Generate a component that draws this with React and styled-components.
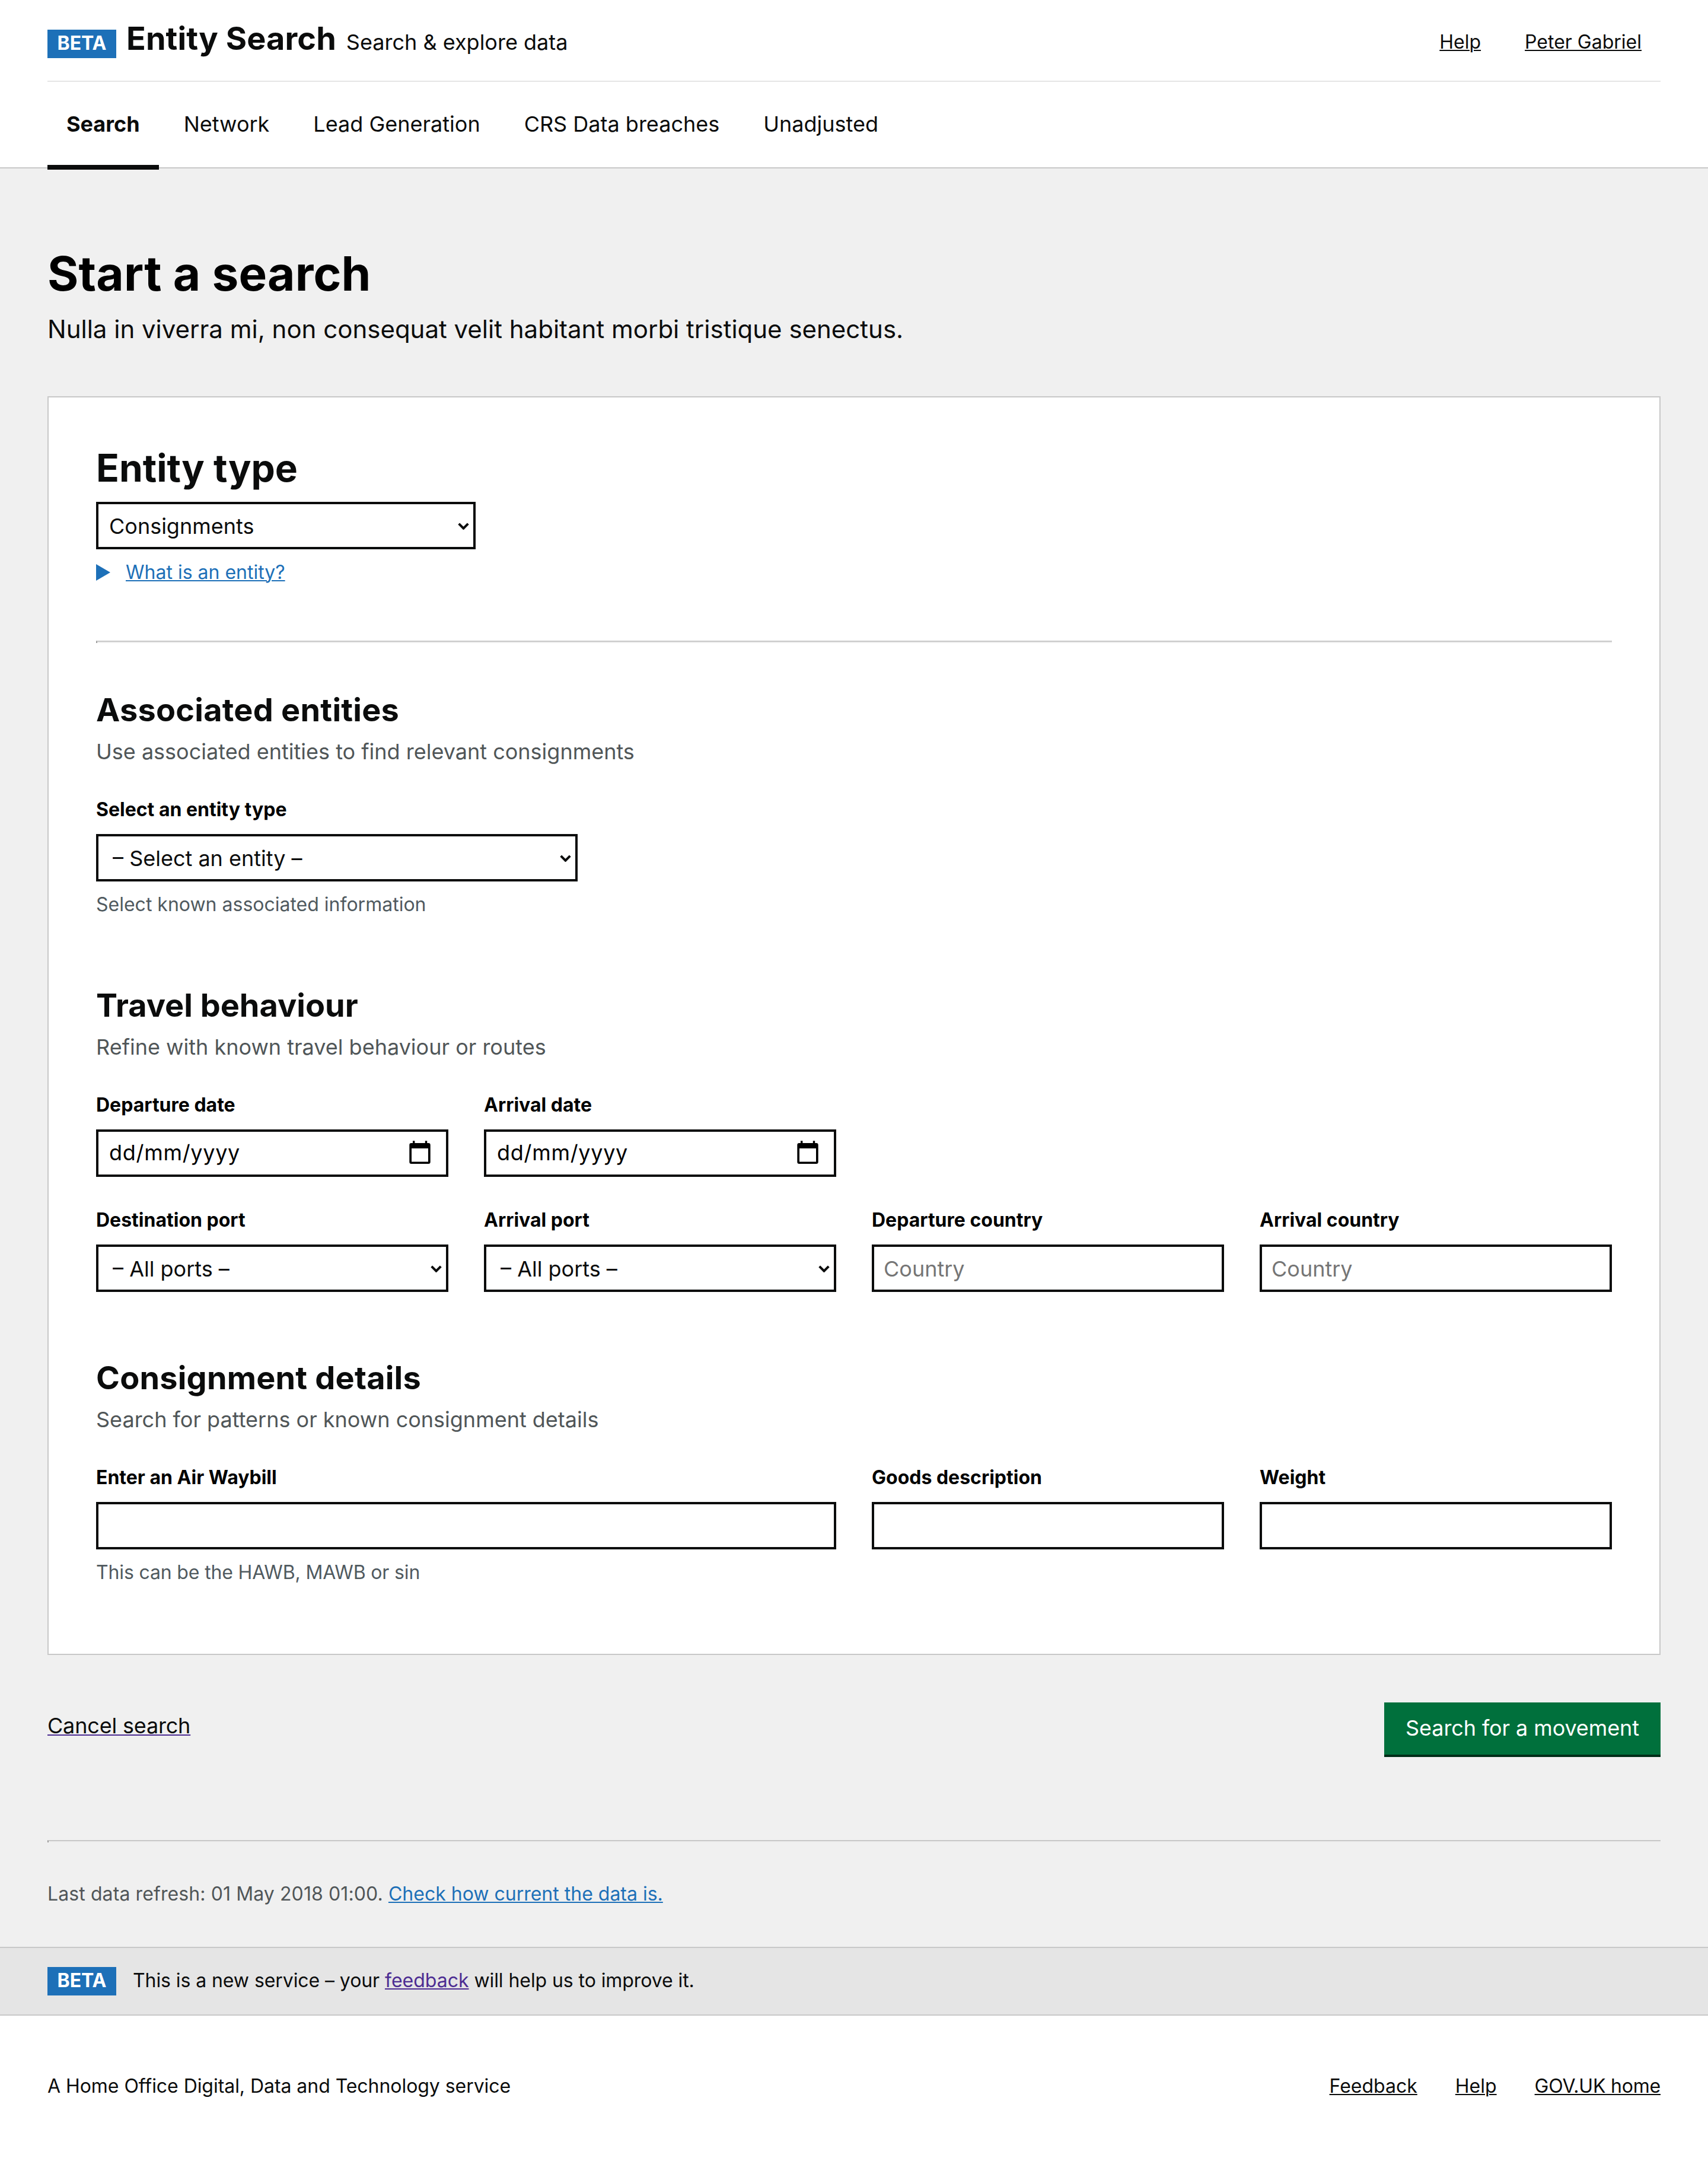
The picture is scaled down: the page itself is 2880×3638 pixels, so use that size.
import React from "react";
import styled, { createGlobalStyle } from "styled-components";

const ink = "#0b0c0c";
const hintGrey = "#505658";
const noteGrey = "#505a5f";
const line = "#c8c8c8";
const blue = "#1d70b8";
const purple = "#4c2c92";

const GlobalStyle = createGlobalStyle`
  *, *::before, *::after { box-sizing: border-box; }
  body {
    margin: 0;
    background: #fff;
    color: ${ink};
    font-family: Inter, "Liberation Sans", sans-serif;
    font-size: 36px;
    line-height: 50px;
    -webkit-font-smoothing: antialiased;
  }
  h1, h2, h3, p { margin: 0; }
`;

const Page = styled.div`
  min-height: 3638px;
  display: flex;
  flex-direction: column;
`;

/* Header */

const Header = styled.header`
  background: #fff;
  border-bottom: 2px solid ${line};
  padding: 0 80px;
  height: 284px;
`;

const TopBar = styled.div`
  display: flex;
  justify-content: space-between;
  align-items: flex-start;
  height: 138px;
  border-bottom: 2px solid #e5e5e5;
`;

const Brand = styled.div`
  display: flex;
  align-items: baseline;
  padding-top: 34px;
`;

const Tag = styled.strong`
  flex: none;
  width: 116px;
  height: 48px;
  padding-top: 8px;
  background: ${blue};
  color: #fff;
  font-size: 32px;
  line-height: 29px;
  font-weight: 700;
  text-align: center;
`;

const ProductName = styled.span`
  margin-left: 17px;
  font-size: 54px;
  line-height: 61px;
  font-weight: 700;
  letter-spacing: 0.1px;
`;

const Tagline = styled.span`
  margin-left: 17px;
`;

const UserLinks = styled.nav`
  display: flex;
  gap: 74px;
  padding: 50px 32px 0 0;
  font-size: 32px;
  line-height: 41px;
`;

const Link = styled.a`
  color: ${(p) => p.$color || ink};
  letter-spacing: ${(p) => p.$tracking || 0}px;
  text-decoration: underline;
  text-decoration-color: ${(p) => p.$underline || p.$color || ink};
  text-decoration-thickness: 2px;
  text-underline-offset: 2px;
`;

const Nav = styled.nav`
  display: flex;
  gap: 10px;
`;

const NavItem = styled.a`
  height: 148px;
  padding: 46px 32px 0;
  border-bottom: 8px solid ${(p) => (p.$active ? ink : "transparent")};
  color: ${ink};
  font-weight: ${(p) => (p.$active ? 700 : 400)};
  text-decoration: none;
  z-index: 1;
`;

/* Main */

const Main = styled.main`
  padding: 127px 80px 69px;
  background: #f0f0f0;
`;

const Title = styled.h1`
  color: #000;
  font-size: 80px;
  line-height: 100px;
  letter-spacing: 0.15px;
`;

const Lead = styled.p`
  margin: 16px 0 85px;
  font-size: 42px;
  line-height: 56px;
`;

const Card = styled.form`
  border: 2px solid ${line};
  background: #fff;
  padding: 78px 80px 117px;
`;

const EntityHeading = styled.h2`
  margin-bottom: 17px;
  font-size: 64px;
  line-height: 81px;
`;

const Summary = styled.div`
  display: flex;
  align-items: center;
  gap: 26px;
  margin-top: 18px;
  font-size: 32px;
  line-height: 41px;
`;

const Triangle = styled.span`
  border-left: 24px solid ${blue};
  border-top: 14px solid transparent;
  border-bottom: 14px solid transparent;
`;

const Rule = styled.hr`
  height: 4px;
  margin: ${(p) => p.$top}px 0 0;
  border: 0;
  border-top: 2px solid ${line};
  border-left: 2px solid #9a9a9a;
  background: #eee;
`;

const Section = styled.section`
  margin-top: ${(p) => p.$top}px;
`;

const SectionTitle = styled.h2`
  font-size: 54px;
  line-height: 67px;
  letter-spacing: ${(p) => p.$tracking || 0}px;
`;

const Hint = styled.p`
  margin-top: 12px;
  color: ${hintGrey};
`;

const FieldGrid = styled.div`
  display: grid;
  grid-template-columns: repeat(4, 594px);
  column-gap: 60px;
  margin-top: 52px;
`;

const FieldBox = styled.div`
  grid-column: span ${(p) => p.$span || 1};
  width: ${(p) => (p.$width ? `${p.$width}px` : "auto")};
`;

const Label = styled.label`
  display: block;
  margin-bottom: 21px;
  color: #000;
  font-size: 32px;
  line-height: 41px;
  font-weight: 700;
`;

const Note = styled.p`
  margin-top: 18px;
  color: ${noteGrey};
  font-size: 32px;
  line-height: 41px;
  letter-spacing: ${(p) => p.$tracking || 0}px;
`;

const Control = styled.div`
  display: flex;
  align-items: center;
  width: ${(p) => (p.$width ? `${p.$width}px` : "100%")};
  height: 80px;
  padding-right: ${(p) => p.$right || 0}px;
  border: 4px solid ${ink};
  background: #fff;
`;

const NativeSelect = styled.select`
  flex: 1;
  min-width: 0;
  height: 72px;
  padding: 2px 0 0 ${(p) => p.$indent}px;
  border: 0;
  outline: 0;
  appearance: none;
  background: transparent;
  color: ${ink};
  font: inherit;
`;

const NativeInput = styled.input`
  flex: 1;
  min-width: 0;
  height: 72px;
  padding: ${(p) => (p.$date ? "0 0 2px 18px" : "2px 0 0 16px")};
  border: 0;
  outline: 0;
  background: transparent;
  color: ${ink};
  font: inherit;
  letter-spacing: ${(p) => (p.$date ? "0.7px" : "normal")};
  &::placeholder {
    color: ${(p) => (p.$date ? "#000" : "#757575")};
    opacity: 1;
  }
`;

const ChevronIcon = styled.svg`
  flex: none;
  margin-top: 2px;
`;

const DateIcon = styled.svg`
  flex: none;
  margin-bottom: 2px;
`;

/* Actions and footer */

const Actions = styled.div`
  display: flex;
  justify-content: space-between;
  align-items: flex-start;
  margin-top: 80px;
  height: 88px;
`;

const CancelSlot = styled.div`
  padding-top: 14px;
`;

const SubmitButton = styled.button`
  width: 466px;
  height: 88px;
  padding: 0 0 2px;
  border: 0;
  border-radius: 0;
  background: #00703c;
  box-shadow: 0 4px 0 #002d18;
  color: #fff;
  font: inherit;
  letter-spacing: -0.1px;
`;

const Refresh = styled.p`
  margin-top: 66px;
  color: ${hintGrey};
  font-size: 32px;
  line-height: 41px;
  letter-spacing: 0.1px;
`;

const PhaseBanner = styled.div`
  display: flex;
  align-items: baseline;
  gap: 28px;
  height: 116px;
  padding: 32px 80px 0;
  border-top: 2px solid ${line};
  border-bottom: 2px solid ${line};
  background: #e5e5e5;
  font-size: 32px;
  line-height: 41px;
`;

const PhaseText = styled.span`
  letter-spacing: -0.08px;
`;

const Footer = styled.footer`
  display: flex;
  justify-content: space-between;
  padding: 98px 80px 0;
  font-size: 32px;
  line-height: 41px;
`;

const FooterText = styled.span`
  letter-spacing: -0.05px;
`;

const FooterLinks = styled.nav`
  display: flex;
  gap: 64px;
`;

function Chevron() {
  return (
    <ChevronIcon width="19" height="12" viewBox="0 0 19 12" fill="none" aria-hidden="true">
      <path d="M1.7 1.9 9.5 9.7 17.3 1.9" stroke={ink} strokeWidth="4" />
    </ChevronIcon>
  );
}

function CalendarIcon() {
  return (
    <DateIcon width="36" height="40" viewBox="0 0 36 40" aria-hidden="true">
      <path
        fill="#000"
        fillRule="evenodd"
        d="M6 0.3h3.4V4h17.4V0.3h3.4V4h2.3a3.2 3.2 0 0 1 3.2 3.2v28.6a3.2 3.2 0 0 1-3.2 3.2h-29A3.2 3.2 0 0 1 .3 35.8V7.2A3.2 3.2 0 0 1 3.5 4H6zM4 13v22.5h28V13z"
      />
    </DateIcon>
  );
}

function Select({ id, value, width, indent = 24 }) {
  return (
    <Control $width={width} $right={7}>
      <NativeSelect id={id} defaultValue={value} $indent={indent}>
        <option value={value}>{value}</option>
      </NativeSelect>
      <Chevron />
    </Control>
  );
}

function Field({ id, label, note, noteTracking, span, width, children }) {
  return (
    <FieldBox $span={span} $width={width}>
      <Label htmlFor={id}>{label}</Label>
      {children}
      {note && <Note $tracking={noteTracking}>{note}</Note>}
    </FieldBox>
  );
}

function DateField({ id, label }) {
  return (
    <Field id={id} label={label}>
      <Control $right={26}>
        <NativeInput id={id} $date placeholder="dd/mm/yyyy" />
        <CalendarIcon />
      </Control>
    </Field>
  );
}

function TextField({ placeholder, ...field }) {
  return (
    <Field {...field}>
      <Control>
        <NativeInput id={field.id} placeholder={placeholder} />
      </Control>
    </Field>
  );
}

const navItems = ["Search", "Network", "Lead Generation", "CRS Data breaches", "Unadjusted"];

export default function App() {
  return (
    <Page>
      <GlobalStyle />
      <Header>
        <TopBar>
          <Brand>
            <Tag>BETA</Tag>
            <ProductName>Entity Search</ProductName>
            <Tagline>Search &amp; explore data</Tagline>
          </Brand>
          <UserLinks>
            <Link>Help</Link>
            <Link>Peter Gabriel</Link>
          </UserLinks>
        </TopBar>
        <Nav>
          {navItems.map((name) => (
            <NavItem key={name} $active={name === "Search"}>
              {name}
            </NavItem>
          ))}
        </Nav>
      </Header>

      <Main>
        <Title>Start a search</Title>
        <Lead>Nulla in viverra mi, non consequat velit habitant morbi tristique senectus.</Lead>

        <Card>
          <EntityHeading>Entity type</EntityHeading>
          <Select id="entity" value="Consignments" width={640} indent={18} />
          <Summary>
            <Triangle />
            <Link $color={blue}>What is an entity?</Link>
          </Summary>
          <Rule $top={95} />

          <Section $top={79}>
            <SectionTitle $tracking={0.25}>Associated entities</SectionTitle>
            <Hint>Use associated entities to find relevant consignments</Hint>
            <FieldGrid>
              <Field
                id="associated"
                label="Select an entity type"
                note="Select known associated information"
                span={2}
                width={812}
              >
                <Select id="associated" value="– Select an entity –" />
              </Field>
            </FieldGrid>
          </Section>

          <Section $top={116}>
            <SectionTitle>Travel behaviour</SectionTitle>
            <Hint>Refine with known travel behaviour or routes</Hint>
            <FieldGrid>
              <DateField id="departure-date" label="Departure date" />
              <DateField id="arrival-date" label="Arrival date" />
            </FieldGrid>
            <FieldGrid>
              <Field id="destination-port" label="Destination port">
                <Select id="destination-port" value="– All ports –" />
              </Field>
              <Field id="arrival-port" label="Arrival port">
                <Select id="arrival-port" value="– All ports –" />
              </Field>
              <TextField id="departure-country" label="Departure country" placeholder="Country" />
              <TextField id="arrival-country" label="Arrival country" placeholder="Country" />
            </FieldGrid>
          </Section>

          <Section $top={111}>
            <SectionTitle $tracking={0.2}>Consignment details</SectionTitle>
            <Hint>Search for patterns or known consignment details</Hint>
            <FieldGrid>
              <TextField
                id="waybill"
                label="Enter an Air Waybill"
                note="This can be the HAWB, MAWB or sin"
                noteTracking={-0.15}
                span={2}
              />
              <TextField id="goods" label="Goods description" />
              <TextField id="weight" label="Weight" />
            </FieldGrid>
          </Section>
        </Card>

        <Actions>
          <CancelSlot>
            <Link $underline={purple} $tracking={-0.18}>
              Cancel search
            </Link>
          </CancelSlot>
          <SubmitButton type="button">Search for a movement</SubmitButton>
        </Actions>

        <Rule $top={144} />
        <Refresh>
          Last data refresh: 01 May 2018 01:00. <Link $color={blue}>Check how current the data is.</Link>
        </Refresh>
      </Main>

      <PhaseBanner>
        <Tag>BETA</Tag>
        <PhaseText>
          This is a new service – your <Link $color={purple}>feedback</Link> will help us to improve it.
        </PhaseText>
      </PhaseBanner>

      <Footer>
        <FooterText>A Home Office Digital, Data and Technology service</FooterText>
        <FooterLinks>
          <Link>Feedback</Link>
          <Link>Help</Link>
          <Link $tracking={-0.2}>GOV.UK home</Link>
        </FooterLinks>
      </Footer>
    </Page>
  );
}
